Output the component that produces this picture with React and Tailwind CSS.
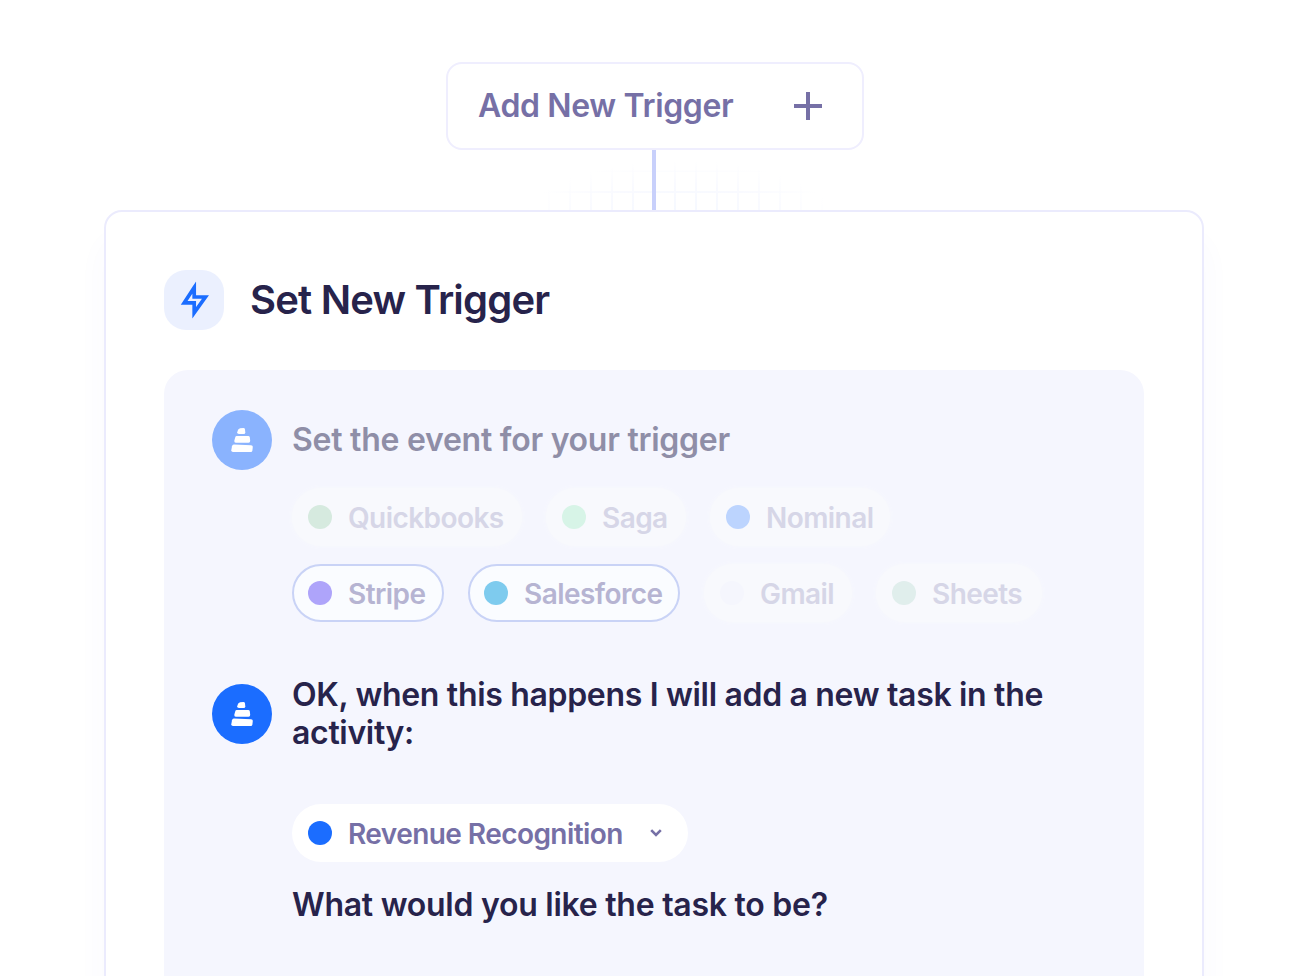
import React from 'react';

const firstRow = [
    { name: 'Quickbooks', dot: 'bg-[#d6eadf]', width: 'w-[230px]' },
    { name: 'Saga', dot: 'bg-[#d7f4e7]', width: 'w-[140px]' },
    { name: 'Nominal', dot: 'bg-[#bcd4fe]', width: 'w-[180px]' },
];

const secondRow = [
    { name: 'Stripe', dot: 'bg-[#aea4fa]', width: 'w-[152px]', selected: true },
    { name: 'Salesforce', dot: 'bg-[#7ecbee]', width: 'w-[212px]', selected: true },
    { name: 'Gmail', dot: 'bg-[#f5f6fd]', width: 'w-[148px]' },
    { name: 'Sheets', dot: 'bg-[#e0eeec]', width: 'w-[166px]' },
];

const Chip = ({ name, dot, width, selected }) => (
    <div
        className={`flex h-[58px] shrink-0 items-center gap-4 rounded-full border-2 pl-3.5 ${width} ${
            selected ? 'border-[#c9d3f6] bg-[#fafcff] text-[#b6b4d2]' : 'border-transparent bg-[#f8f9fd] text-[#d6d6e7] shadow-[0_0_5px_#f8f9fd]'
        }`}
    >
        <span className={`size-6 shrink-0 rounded-full ${dot}`} />
        <span className="pt-0.5 text-[28px] leading-[34px] font-semibold tracking-[-0.56px] whitespace-nowrap">{name}</span>
    </div>
);

const Avatar = ({ color }) => (
    <div className={`flex size-[60px] shrink-0 items-center justify-center rounded-full ${color}`}>
        <svg width="22" height="24" viewBox="0 0 22 24" fill="white">
            <path d="M9 0.2 L12.4 0 Q13.8 0 14 1.4 L14.3 4.4 Q14.3 6 12.6 6 H8 Q6 6 6.2 4.2 Q6.8 0.8 9 0.2 Z" />
            <path d="M5.8 8 H17.2 Q18.6 8 18.8 9.3 L19.2 12.8 Q19.2 14.8 17.6 14.8 H4.8 Q3 14.8 3.3 12.8 L4.2 9.4 Q4.5 8 5.8 8 Z" />
            <path d="M2.8 16.6 L20 17.2 Q21.8 17.3 21.8 18.8 L21.4 22.4 Q21.2 24 19.8 24 H2 Q0.2 24 0.3 22.3 L1 18.2 Q1.3 16.6 2.8 16.6 Z" />
        </svg>
    </div>
);

const gridLines = [528, 549, 570, 591, 612, 633, 654, 675, 696, 717, 738, 759, 780, 801, 822];

const Connector = () => (
    <svg className="block h-[60px] w-full shrink-0" viewBox="0 0 1308 60">
        <defs>
            <radialGradient id="fade" gradientUnits="userSpaceOnUse" cx="0" cy="0" r="1" gradientTransform="translate(680 70) scale(155 60)">
                <stop offset="0" stopColor="#f4f8ff" />
                <stop offset="0.6" stopColor="#f9faff" />
                <stop offset="1" stopColor="#f9faff" stopOpacity="0" />
            </radialGradient>
        </defs>
        <g fill="url(#fade)">
            {gridLines.map((x) => (
                <rect key={x} x={x - 1} y="0" width="2" height="60" />
            ))}
            <rect x="500" y="20.5" width="350" height="1.5" />
            <rect x="500" y="41" width="350" height="2" />
        </g>
        <rect x="652" y="0" width="4" height="60" fill="#c8d0fb" />
    </svg>
);

const App = () => {
    return (
        <div className="flex h-[976px] w-[1308px] flex-col items-center overflow-hidden bg-white pt-[62px] font-['Inter',sans-serif] text-[#27234b]">
            <div className="ml-0.5 flex h-[88px] w-[418px] shrink-0 items-center justify-between rounded-2xl border-2 border-[#efeefe] pr-10 pl-[30px] text-[#7670a6]">
                <span className="text-[32px] leading-10 font-semibold tracking-[-0.36px] whitespace-nowrap">Add New Trigger</span>
                <svg width="28" height="28" viewBox="0 0 28 28" fill="currentColor">
                    <path d="M12 0H16V12H28V16H16V28H12V16H0V12H12Z" />
                </svg>
            </div>

            <Connector />

            <div className="h-[820px] w-[1100px] shrink-0 rounded-[18px] border-2 border-[#ebebfd] bg-white px-[58px] pt-[58px] shadow-[0_32px_32px_rgba(90,80,220,0.035)]">
                <div className="flex items-center gap-[26px]">
                    <div className="flex size-[60px] items-center justify-center rounded-[22px] bg-[#ebf0fe]">
                        <svg className="overflow-visible" width="28" height="40" viewBox="0 0 28 40" fill="none" stroke="#1b6dff" strokeWidth="3.7" strokeMiterlimit="10">
                            <path d="M14.2 7.6 L4.2 22.8 H14.2 V32.8 L25.4 17 H14.2 Z" />
                        </svg>
                    </div>
                    <h1 className="text-[40px] leading-[48px] font-semibold tracking-[-0.8px]">Set New Trigger</h1>
                </div>

                <div className="mt-10 h-[640px] rounded-3xl bg-[#f5f6fe] px-12 pt-10">
                    <div className="flex items-center gap-5">
                        <Avatar color="bg-[#8ab3fe]" />
                        <p className="text-[32px] leading-[38px] font-semibold tracking-[-0.26px] text-[#8f8ea7]">Set the event for your trigger</p>
                    </div>
                    <div className="mt-[18px] ml-20 flex gap-6">
                        {firstRow.map((item) => (
                            <Chip key={item.name} {...item} />
                        ))}
                    </div>
                    <div className="mt-[18px] ml-20 flex gap-6">
                        {secondRow.map((item) => (
                            <Chip key={item.name} {...item} />
                        ))}
                    </div>

                    <div className="mt-[54px] flex items-center gap-5">
                        <Avatar color="bg-[#1b6dff]" />
                        <p className="w-[780px] text-[32px] leading-[38px] font-semibold tracking-[-0.32px]">
                            OK, when this happens I will add a new task in the activity:
                        </p>
                    </div>
                    <div className="mt-[52px] ml-20 flex h-[58px] w-[396px] items-center rounded-full bg-white pl-4 text-[#7670a6]">
                        <span className="size-6 rounded-full bg-[#1b6dff]" />
                        <span className="ml-4 w-[302px] pt-0.5 text-[28px] leading-[34px] font-semibold tracking-[-0.56px] whitespace-nowrap">
                            Revenue Recognition
                        </span>
                        <svg width="12" height="8" viewBox="0 0 12 8" fill="none" stroke="currentColor" strokeWidth="2.6">
                            <path d="M1.2 1.2 L6 6 L10.8 1.2" />
                        </svg>
                    </div>
                    <p className="mt-6 ml-20 text-[32px] leading-[38px] font-semibold tracking-[-0.26px]">What would you like the task to be?</p>
                </div>
            </div>
        </div>
    );
};

export default App;
